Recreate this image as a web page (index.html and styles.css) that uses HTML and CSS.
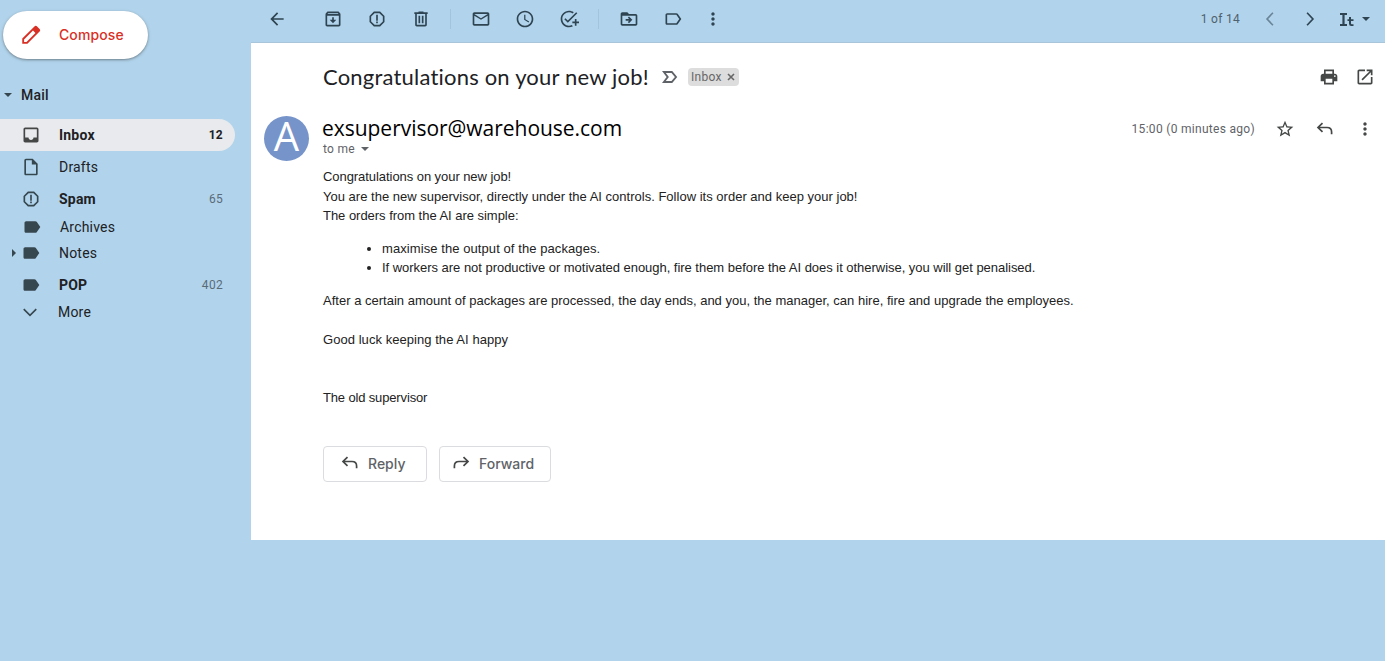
FILE: index.html
```html
<!DOCTYPE html>
<html lang="en">
<head>
<meta charset="utf-8">
<title>Congratulations on your new job!</title>
<link rel="stylesheet" href="styles.css">
</head>
<body>
<svg class="defs" aria-hidden="true">
  <symbol id="spam" viewBox="0 0 24 24"><path d="M15.73 3H8.27L3 8.27v7.46L8.27 21h7.46L21 15.73V8.27L15.73 3zM19 14.9 14.9 19H9.1L5 14.9V9.1L9.1 5h5.8L19 9.1v5.8zM11 7h2v7h-2zM11 15h2v2h-2z"/></symbol>
  <symbol id="tag" viewBox="0 0 24 24"><path d="M17.63 5.84C17.27 5.33 16.67 5 16 5L5 5.01C3.9 5.01 3 5.9 3 7v10c0 1.1.9 1.99 2 1.99L16 19c.67 0 1.27-.33 1.63-.84L22 12l-4.37-6.16z"/></symbol>
  <symbol id="dots" viewBox="0 0 24 24"><path d="M12 8c1.1 0 2-.9 2-2s-.9-2-2-2-2 .9-2 2 .9 2 2 2zm0 2c-1.1 0-2 .9-2 2s.9 2 2 2 2-.9 2-2-.9-2-2-2zm0 6c-1.1 0-2 .9-2 2s.9 2 2 2 2-.9 2-2-.9-2-2-2z"/></symbol>
  <symbol id="reply" viewBox="0 0 20 20"><path d="M7.5 4.2 3 8.5l4.500 4.300M3.200 8.500H12q4.600 0 4.600 4.600V15.200" fill="none" stroke="currentColor" stroke-width="1.700"/></symbol>
  <symbol id="caret" viewBox="0 0 8 4"><path d="M0 0h8L4 4z"/></symbol>
</svg>
<div class="app">
  <aside class="sidebar">
    <button class="compose">
      <svg class="icon pencil" viewBox="0 0 24 24"><path fill-rule="evenodd" d="M22.300 4.700 19.300 1.700c-.9-.9-2.300-.9-3.200 0L1.500 16.300V22.500h6.200L22.300 7.900c.9-.9.9-2.300 0-3.200zM6.600 20.300H3.700V17.400L14.400 6.700l2.900 2.900z"/></svg>
      <span>Compose</span>
    </button>
    <div class="section"><svg class="caret"><use href="#caret"/></svg><span>Mail</span></div>
    <nav class="folders">
      <a class="row active"><svg class="icon" viewBox="0 0 24 24"><path d="M19 3H5c-1.100 0-2 .9-2 2v14c0 1.100.9 2 2 2h14c1.100 0 2-.9 2-2V5c0-1.100-.9-2-2-2zm0 12h-4c0 1.660-1.350 3-3 3s-3-1.340-3-3H5V5h14v10z"/></svg><span class="name">Inbox</span><span class="count">12</span></a>
      <a class="row"><svg class="icon" viewBox="0 0 24 24"><path d="M14 2H6c-1.100 0-2 .9-2 2v16c0 1.100.9 2 2 2h12c1.100 0 2-.9 2-2V8l-6-6zM6 20V4h7v5h5v11H6z"/></svg><span class="name">Drafts</span></a>
      <a class="row bold"><svg class="icon"><use href="#spam"/></svg><span class="name">Spam</span><span class="count">65</span></a>
      <a class="row archives"><svg class="icon"><use href="#tag"/></svg><span class="name">Archives</span></a>
      <a class="row notes"><svg class="expand" viewBox="0 0 4 8"><path d="M0 0v8l4-4z"/></svg><svg class="icon"><use href="#tag"/></svg><span class="name">Notes</span></a>
      <a class="row bold pop"><svg class="icon"><use href="#tag"/></svg><span class="name">POP</span><span class="count">402</span></a>
      <a class="row more"><svg class="icon" viewBox="0 0 24 24"><path d="M4.500 8.500 12 16l7.500-7.500" fill="none" stroke="currentColor" stroke-width="2"/></svg><span class="name">More</span></a>
    </nav>
  </aside>
  <main class="main">
    <header class="toolbar">
      <svg class="icon back" viewBox="0 0 24 24"><path d="M20 11H7.830l5.590-5.590L12 4l-8 8 8 8 1.410-1.410L7.830 13H20v-2z"/></svg>
      <div class="tools">
        <svg class="icon" viewBox="0 0 24 24"><path d="M20.540 5.230 19.150 3.550C18.880 3.210 18.470 3 18 3H6c-.47 0-.88.21-1.160.55L3.460 5.230C3.170 5.570 3 6.020 3 6.500V19c0 1.100.9 2 2 2h14c1.100 0 2-.9 2-2V6.500c0-.48-.17-.93-.46-1.270zM6.240 5h11.520l.83 1H5.420l.82-1zM5 19V8h14v11H5zm8-9h-2v3H8l4 4 4-4h-3z"/></svg>
        <svg class="icon"><use href="#spam"/></svg>
        <svg class="icon" viewBox="0 0 24 24"><path d="M15 4V3H9v1H4v2h1v13c0 1.100.9 2 2 2h10c1.100 0 2-.9 2-2V6h1V4h-5zm2 15H7V6h10v13zM9 8h2v9H9zm4 0h2v9h-2z"/></svg>
      </div>
      <i class="rule"></i>
      <div class="tools">
        <svg class="icon" viewBox="0 0 24 24"><path d="M20 4H4c-1.100 0-2 .9-2 2v12c0 1.100.9 2 2 2h16c1.100 0 2-.9 2-2V6c0-1.100-.9-2-2-2zm0 14H4V8l8 5 8-5v10zm-8-7L4 6h16l-8 5z"/></svg>
        <svg class="icon" viewBox="0 0 24 24"><path d="M11.990 2C6.470 2 2 6.480 2 12s4.470 10 9.990 10C17.520 22 22 17.520 22 12S17.520 2 11.990 2zM12 20c-4.420 0-8-3.580-8-8s3.580-8 8-8 8 3.580 8 8-3.580 8-8 8zm.5-13H11v6l5.250 3.150.75-1.230-4.500-2.670z"/></svg>
        <svg class="icon" viewBox="0 0 24 24"><path d="M22 5.180 10.590 16.600l-4.240-4.240 1.410-1.410 2.830 2.830 10-10L22 5.180zM12 20c-4.410 0-8-3.590-8-8s3.590-8 8-8c1.570 0 3.040.46 4.280 1.250l1.450-1.450C16.100 2.670 14.130 2 12 2 6.480 2 2 6.480 2 12s4.480 10 10 10c1.730 0 3.360-.44 4.780-1.220l-1.500-1.500c-1 .46-2.110.72-3.280.72zm7-5h-3v2h3v3h2v-3h3v-2h-3v-3h-2v3z"/></svg>
      </div>
      <i class="rule"></i>
      <div class="tools">
        <svg class="icon" viewBox="0 0 24 24"><path d="M20 6h-8l-2-2H4c-1.100 0-2 .9-2 2v12c0 1.100.9 2 2 2h16c1.100 0 2-.9 2-2V8c0-1.100-.9-2-2-2zm0 12H4V8h16v10zm-7.840-5.990H8v2h4.160l-1.590 1.590L11.990 17 16 13.010 11.990 9l-1.410 1.410z"/></svg>
        <svg class="icon" viewBox="0 0 24 24"><path d="M17.630 5.840C17.270 5.330 16.670 5 16 5L5 5.010C3.900 5.010 3 5.900 3 7v10c0 1.100.9 1.990 2 1.990L16 19c.67 0 1.270-.33 1.630-.84L22 12l-4.370-6.160zM16 17H5V7h11l3.550 5L16 17z"/></svg>
      </div>
      <svg class="icon kebab"><use href="#dots"/></svg>
      <span class="pager">1 of 14</span>
      <svg class="icon newer" viewBox="0 0 24 24"><path d="M15.500 4.500 8.500 12l7 7.500" fill="none" stroke="currentColor" stroke-width="2"/></svg>
      <svg class="icon older" viewBox="0 0 24 24"><path d="M8.500 4.500l7 7.500-7 7.500" fill="none" stroke="currentColor" stroke-width="2"/></svg>
      <svg class="tools-input" viewBox="0 0 14 13"><path d="M0 0h7v2H4.600v9H7v2H0v-2h2.400V2H0zM9 4h2v2.300h2.500V8H11v2.500q0 .8.8.8h1.700V13h-2.200Q9 13 9 10.800V8H7.500V6.300H9z"/></svg>
      <svg class="caret"><use href="#caret"/></svg>
    </header>
    <article class="mail">
      <div class="subject-row">
        <h1>Congratulations on your new job!</h1>
        <svg class="important" viewBox="0 0 16 12"><path d="M1.900 1H9.800L14 6 9.800 11H1.900l3.800-5z" fill="none" stroke="currentColor" stroke-width="1.900"/></svg>
        <span class="chip">Inbox<svg viewBox="0 0 8 8"><path d="M1 1l6 6M7 1 1 7" stroke="currentColor" stroke-width="1.600"/></svg></span>
        <svg class="icon print" viewBox="0 0 24 24"><path d="M19 8h-1V3H6v5H5c-1.660 0-3 1.340-3 3v6h4v4h12v-4h4v-6c0-1.660-1.340-3-3-3zM8 5h8v3H8V5zm8 14H8v-5h8v5zm3-7c-.55 0-1-.45-1-1s.45-1 1-1 1 .45 1 1-.45 1-1 1z"/></svg>
        <svg class="icon" viewBox="0 0 24 24"><path d="M19 19H5V5h7V3H5c-1.110 0-2 .9-2 2v14c0 1.100.89 2 2 2h14c1.100 0 2-.9 2-2v-7h-2v7zM14 3v2h3.590l-9.830 9.830 1.410 1.410L19 6.410V10h2V3h-7z"/></svg>
      </div>
      <div class="sender-row">
        <span class="avatar">A</span>
        <div class="sender">
          <span class="from">exsupervisor@warehouse.com</span>
          <span class="to">to me<svg class="caret"><use href="#caret"/></svg></span>
        </div>
        <div class="meta">
          <span>15:00 (0 minutes ago)</span>
          <svg class="icon" viewBox="0 0 24 24"><path d="M22 9.240l-7.190-.62L12 2 9.190 8.630 2 9.240l5.460 4.730L5.820 21 12 17.270 18.180 21l-1.630-7.030L22 9.240zM12 15.400l-3.760 2.270 1-4.280-3.320-2.880 4.380-.38L12 6.100l1.710 4.040 4.380.38-3.320 2.880 1 4.280L12 15.400z"/></svg>
          <svg class="icon"><use href="#reply"/></svg>
          <svg class="icon"><use href="#dots"/></svg>
        </div>
      </div>
      <div class="body">
        <p><span class="greeting">Congratulations on your new job!</span><br><span class="intro">You are the new supervisor, directly under the AI controls. Follow its order and keep your job!</span><br><span class="lead">The orders from the AI are simple:</span></p>
        <ul>
          <li class="order-output">maximise the output of the packages.</li>
          <li class="order-fire">If workers are not productive or motivated enough, fire them before the AI does it otherwise, you will get penalised.</li>
        </ul>
        <p><span class="intro">After a certain amount of packages are processed, the day ends, and you, the manager, can hire, fire and upgrade the employees.</span><br><br><span class="wish">Good luck keeping the AI happy</span><br><br><br><span class="signature">The old supervisor</span></p>
      </div>
      <div class="actions">
        <button class="reply"><svg class="icon"><use href="#reply"/></svg>Reply</button>
        <button class="forward"><svg class="icon flip"><use href="#reply"/></svg>Forward</button>
      </div>
    </article>
  </main>
</div>
</body>
</html>
```
FILE: styles.css
```css
* { box-sizing: border-box; }
body { margin: 0; height: 661px; overflow: hidden; background: #b1d4ec; color: #202124; font-family: Roboto, "Liberation Sans", sans-serif; font-size: 14px; }
.defs { position: absolute; width: 0; height: 0; }
svg { display: block; flex: none; fill: currentColor; }
.icon { width: 20px; height: 20px; }
.caret { width: 8px; height: 4px; }
button { display: flex; align-items: center; background: #fff; }
.app { display: flex; height: 661px; }

.sidebar { width: 251px; flex: none; padding-top: 11px; }
.compose { width: 145px; height: 48px; margin-left: 3px; padding: 0 0 1px 18px; gap: 18px; border: 0; border-radius: 24px; color: #d93025; font: 500 14px Inter, sans-serif; letter-spacing: .1px; box-shadow: 0 1px 2px rgba(60,64,67,.4), 0 1px 3px 1px rgba(60,64,67,.15); }
.section { display: flex; align-items: center; gap: 9px; height: 24px; margin-top: 24px; padding-left: 4px; font-weight: 500; letter-spacing: .2px; }
.section .caret, .row .icon, .expand { color: #37474f; }
.folders { margin-top: 12px; }
.row { position: relative; display: flex; align-items: center; width: 235px; height: 32px; padding: 0 12px 0 21px; letter-spacing: .2px; }
.row .name { margin-left: 18px; }
.row.active { background: #e8eaed; border-radius: 0 16px 16px 0; font-weight: 700; }
.row.active .icon { color: #444746; }
.row.bold .name { font-weight: 700; }
.count { margin-left: auto; font-size: 12px; letter-spacing: .3px; }
.bold .count { color: #5a6b78; }
.archives { height: 24px; padding-left: 22px; }
.archives .name { margin-left: 17px; padding-left: 1px; }
.notes { height: 28px; }
.expand { position: absolute; left: 12px; top: 10px; width: 4px; height: 8px; }
.pop { height: 36px; }
.more { height: 18px; padding-left: 20px; }

.main { flex: 1; min-width: 0; }
.toolbar { display: flex; align-items: center; height: 43px; padding: 0 15px 5px 16px; border-bottom: 1px solid #a9c5da; color: #2f4452; }
.tools { display: flex; gap: 24px; }
.back { margin-right: 36px; }
.rule { width: 1px; height: 20px; margin: 0 20px 0 19px; background: #a2c4dc; }
.kebab { margin-left: 20px; }
.pager { margin-left: auto; font-size: 12px; letter-spacing: .3px; color: #50616e; }
.newer { margin-left: 20px; color: #6a8498; }
.older { margin-left: 20px; }
.tools-input { width: 14px; height: 13px; margin: 2px 8px 0 20px; }

.mail { height: 497px; background: #fff; }
.subject-row { display: flex; align-items: center; height: 69px; padding: 0 10px 2px 72px; color: #444746; }
h1 { margin: 0; width: 327px; font: 400 22px Lato, sans-serif; letter-spacing: .2px; color: #202124; white-space: nowrap; }
.important { width: 16px; height: 12px; margin: 0 10px 0 12px; color: #5f6368; }
.chip { display: flex; align-items: center; gap: 5px; width: 51px; height: 18px; padding-left: 3px; border-radius: 4px; background: #ddd; color: #666; font-size: 12px; letter-spacing: .3px; }
.chip svg { width: 8px; height: 8px; }
.print { margin: 0 16px 0 auto; }
.sender-row { display: flex; height: 55px; padding: 0 10px 0 13px; }
.avatar { width: 45px; height: 45px; margin-top: 4px; border-radius: 50%; background: #7794ca; color: #fff; font: 40px/40px "Open Sans", sans-serif; text-align: center; }
.sender { display: flex; flex-direction: column; margin-left: 13px; }
.from { height: 30px; font: 21px/33px "Open Sans", sans-serif; letter-spacing: -.03px; color: #000; }
.to { display: flex; align-items: center; gap: 6px; height: 14px; padding-left: 1px; font-size: 12px; letter-spacing: .3px; color: #5f6368; }
.meta { display: flex; align-items: center; gap: 20px; height: 34px; margin-left: auto; font-size: 12px; letter-spacing: .3px; color: #444746; }
.meta span { color: #5f6368; }
.body { margin-left: 72px; font: 13px/19.5px "Liberation Sans", sans-serif; color: #222; white-space: nowrap; }
.body p { margin: 0; }
.body ul { margin: 13px 0; padding-left: 59px; }
.greeting { letter-spacing: -.06px; }
.intro { letter-spacing: .01px; }
.lead, .order-fire { letter-spacing: -.03px; }
.order-output { letter-spacing: .08px; }
.wish { letter-spacing: .05px; }
.signature { letter-spacing: -.15px; }
.actions { display: flex; gap: 12px; margin: 38px 0 0 72px; }
.actions button { height: 36px; padding: 0 0 1px; gap: 8px; border: 1px solid #dadce0; border-radius: 4px; color: #5f6368; font: 500 14px Inter, sans-serif; }
.actions .icon { color: #444746; }
.actions .reply { width: 104px; padding-left: 16px; }
.actions .forward { width: 112px; padding-left: 11px; }
.flip { transform: scaleX(-1); }
```
